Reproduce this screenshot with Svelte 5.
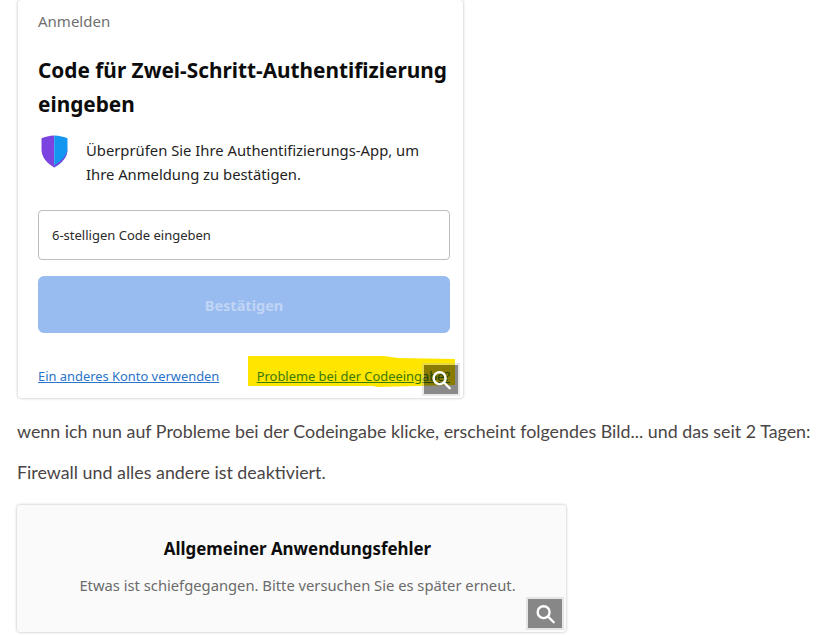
<script>
	const shield = { left: 'M13.5 1C9 1.2 4.5 2.2 1.5 3.4V14C1.5 21 6.5 27 13.5 30.5Z', right: 'M13.5 1C18 1.2 23 2.2 26 3.4V14C26 21 20.5 27 13.5 30.5Z' };
</script>

{#snippet zoomIcon()}
	<span class="zoom">
		<svg viewBox="0 0 24 24" width="22" height="22" fill="none" stroke="#fff" stroke-width="2.6" stroke-linecap="round">
			<circle cx="10.5" cy="10" r="6.5" />
			<path d="M15.5 15l6 6" />
		</svg>
	</span>
{/snippet}

<main class="post">
	<figure class="shot login">
		<div class="crumb">Anmelden</div>
		<h1>Code für Zwei-Schritt-Authentifizierung eingeben</h1>
		<div class="notice">
			<svg class="shield" viewBox="1 0.5 25.5 30.5" width="27" height="33" preserveAspectRatio="none">
				<path d={shield.left} fill="#7b44e0" />
				<path d={shield.right} fill="#1296ef" />
				<path d="M13.5 30.5C20.5 27 26 21 26 14V12.5C26 19 20 25 13.5 28.5Z" fill="#7b44e0" />
			</svg>
			<p>Überprüfen Sie Ihre Authentifizierungs-App, um Ihre Anmeldung zu bestätigen.</p>
		</div>
		<div class="field">6-stelligen Code eingeben</div>
		<button class="confirm" disabled>Bestätigen</button>
		<div class="links">
			<a href="#konto">Ein anderes Konto verwenden</a>
			<a class="marked" href="#code">
				<svg class="marker" viewBox="0 0 208 32" width="208" height="32" preserveAspectRatio="none">
					<path d="M0 1H136L150 3L207 4V30L130 32L125 31H0Z" fill="#ffe600" />
				</svg>
				<span>Probleme bei der Codeeingabe?</span>
			</a>
		</div>
		{@render zoomIcon()}
	</figure>

	<p class="text first">wenn ich nun auf Probleme bei der Codeingabe klicke, erscheint folgendes Bild... und das seit 2 Tagen:</p>
	<p class="text second">Firewall und alles andere ist deaktiviert.</p>

	<figure class="shot error">
		<h2>Allgemeiner Anwendungsfehler</h2>
		<p>Etwas ist schiefgegangen. Bitte versuchen Sie es später erneut.</p>
		{@render zoomIcon()}
	</figure>
</main>

<style>
	:global(body) {
		margin: 0;
		background: #fff;
	}

	.post {
		height: 635px;
		overflow: hidden;
		padding-left: 17px;
		box-sizing: border-box;
		font-family: 'Noto Sans', 'Open Sans', sans-serif;
	}

	.shot {
		position: relative;
		margin: 0;
		box-sizing: border-box;
		border-radius: 3px;
		box-shadow: 0 0 3px rgba(0, 0, 0, 0.3);
	}

	.login {
		width: 445px;
		height: 398px;
		margin-left: 1px;
		padding: 11px 13px 0 20px;
		background: #fff;
	}

	.crumb {
		font-size: 15px;
		line-height: 20px;
		color: #6f6f6f;
	}

	h1 {
		margin: 22px -2px 0 0;
		font-size: 20.8px;
		line-height: 34px;
		font-weight: 700;
		color: #0c0c0c;
	}

	.notice {
		display: flex;
		gap: 18px;
		margin-top: 17px;
	}

	.shield {
		flex: none;
		margin: -3px 0 0 3px;
	}

	.notice p {
		margin: 0;
		font-size: 14.8px;
		line-height: 24px;
		color: #1f1f1f;
	}

	.field {
		display: flex;
		align-items: center;
		height: 50px;
		margin-top: 24px;
		padding-left: 13px;
		box-sizing: border-box;
		border: 1px solid #bdbdbd;
		border-radius: 4px;
		font-size: 13px;
		color: #2a2a2a;
	}

	.confirm {
		display: block;
		width: 100%;
		height: 57px;
		margin-top: 16px;
		border: 0;
		border-radius: 6px;
		background: #99bcf0;
		color: #c0d5f5;
		font: 700 14.5px 'Noto Sans', 'Open Sans', sans-serif;
	}

	.links {
		display: flex;
		justify-content: space-between;
		margin-top: 34px;
		font-size: 12.9px;
		line-height: 18px;
	}

	.links a {
		color: #2a74c9;
	}

	.links .marked {
		position: relative;
		color: #3a7a0a;
	}

	.marker {
		position: absolute;
		left: -9px;
		top: -12px;
	}

	.marked span {
		position: relative;
	}

	.zoom {
		position: absolute;
		right: 5px;
		bottom: 4px;
		display: flex;
		align-items: center;
		justify-content: center;
		width: 34px;
		height: 29px;
		background: rgba(0, 0, 0, 0.46);
		box-shadow: 0 0 0 2px rgba(190, 190, 190, 0.35);
	}

	.error .zoom {
		right: 4px;
	}

	.text {
		margin: 0;
		font-family: Lato, 'Open Sans', sans-serif;
		font-size: 17.85px;
		line-height: 24px;
		color: #4a4545;
	}

	.first {
		margin-top: 21px;
	}

	.second {
		margin-top: 17px;
	}

	.error {
		width: 549px;
		height: 127px;
		margin-top: 21px;
		padding: 32px 0 0 12px;
		background: #fafafa;
		text-align: center;
	}

	h2 {
		margin: 0;
		font-size: 16.9px;
		line-height: 24px;
		font-weight: 700;
		color: #0c0c0c;
	}

	.error p {
		margin: 14px 0 0;
		font-size: 14.75px;
		line-height: 20px;
		color: #6b6b6b;
	}
</style>
